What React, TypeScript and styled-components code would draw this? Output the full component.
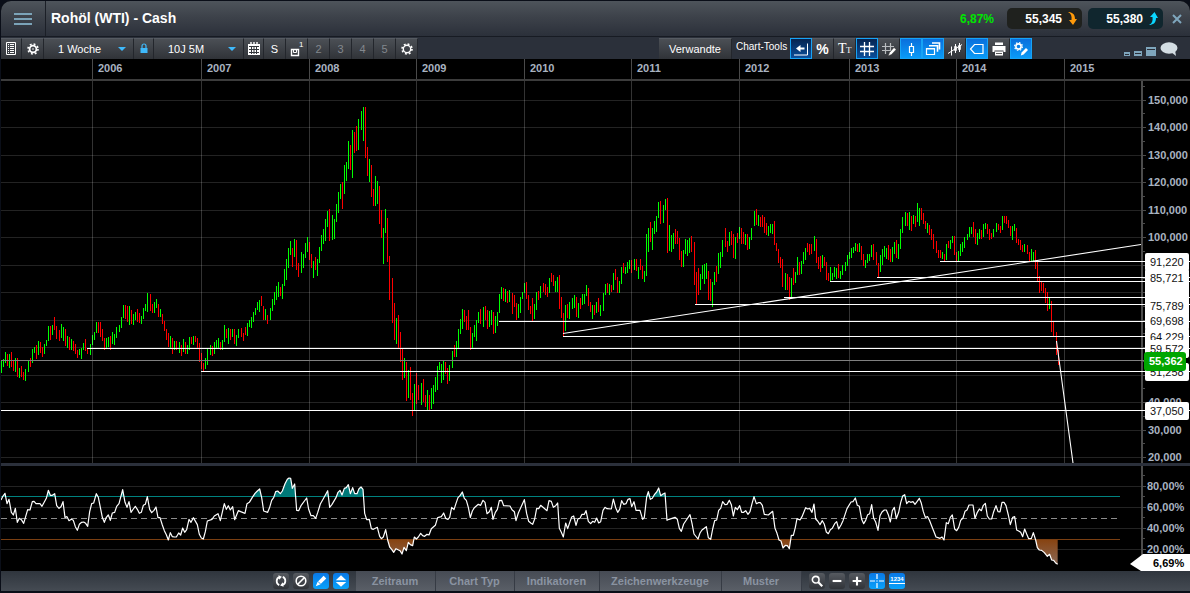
import React from "react";
import styled, { createGlobalStyle, css } from "styled-components";

const GlobalStyle = createGlobalStyle`
  * { box-sizing: border-box; }
  body {
    margin: 0;
    background: #0a0e18;
    font-family: "Liberation Sans", Arial, sans-serif;
    font-size: 11px;
    color: #fff;
  }
  button, select { font: inherit; color: inherit; }
`;

/* ---------- data ---------- */

/* Weekly bars: direction and x, then high and low, in thirds of a pixel from the block's origin. */
const UNIT = 3;

const priceBlocks = [
  {
    x: 0,
    y: 230,
    bars: `g4 391 430|g10 388 411|g16 366 400|r22 372 409|g28 373 415|r34 366 412|r40 391 422|g46 385 427|r52 386 442|g58 416 445|r64 409 440|r70 427 450|g76 418 452|g85 391 427|r91 385 412|g97 358 400|g103 351 370|r109 346 386|g115 334 376|r121 336 370|r127 353 382|g133 344 372|g139 331 348|g145 288 334|r151 289 330|g157 286 314|r163 262 300|r169 289 327|r178 301 332|g184 283 325|g190 291 332|r196 298 347|g202 319 353|r208 322 360|g214 328 359|r220 335 363|r226 343 371|r232 360 383|g238 359 376|g244 355 388|g250 340 361|r256 328 362|r262 355 372|g271 343 375|g277 316 346|g283 307 329|g289 277 310|r295 276 309|r301 278 320|r307 298 334|r313 325 359|g319 325 354|g325 321 350|r331 320 359|g337 307 342|g343 313 344|g349 291 323|g358 285 306|g364 261 293|g370 225 263|r376 226 267|r382 228 276|g388 228 285|r394 240 281|g400 252 285|g406 247 270|r412 238 277|r418 250 280|g424 259 281|g430 236 266|g436 222 243|g442 189 246|r451 192 242|r457 222 248|g463 216 248|g469 207 233|r475 223 262|g481 238 262|r487 252 281|r493 273 303|r499 297 330|r505 309 351|g511 319 353|r517 325 372|g523 333 360|r529 335 360|g538 337 368|r544 346 378|g550 327 366|r556 337 372|g562 347 371|g568 321 360|r574 321 342|g580 318 345|r586 318 336|r592 325 354|r598 341 396|r604 370 416|r610 399 424|g616 385 417|g622 359 404|g631 346 374|r637 348 377|g643 338 371|g649 331 355|g655 324 354|r661 338 361|g667 331 360|g673 286 335|r679 297 323|g685 294 342|r691 297 330|g697 297 321|r703 297 341|g709 317 348|g715 299 325|r724 294 320|r730 309 333|r736 291 315|g742 280 318|g748 270 290|g754 262 295|g760 246 275|g766 234 255|g772 217 240|g778 210 245|r784 198 228|r790 228 270|g796 237 271|r802 256 281|g811 234 270|g817 208 242|g823 186 225|g829 168 210|g835 156 201|r841 171 197|g847 162 207|g853 117 167|g859 87 149|g865 54 114|g871 34 75|r877 54 112|g883 28 80|r889 30 119|r895 99 140`,
  },
  {
    x: 240,
    y: 90,
    bars: `g184 487 549|g190 493 533|g196 460 505|g202 442 486|r208 456 511|r214 492 534|g220 514 563|r226 503 539|g232 508 557|g238 471 518|g244 436 483|g250 418 461|g256 388 452|g262 363 410|r268 358 454|g277 375 450|g283 387 447|g289 342 395|g295 307 368|g301 282 326|r307 278 357|g313 226 311|g319 217 273|g325 154 236|r331 165 239|g337 121 265|r343 127 189|r349 109 182|g355 88 180|g364 65 120|g370 52 153|r376 52 204|r382 172 257|g388 207 275|r394 226 322|r400 298 348|g406 258 347|g412 273 342|r418 289 401|r424 361 443|g430 415 522|g436 357 428|r442 386 515|r448 500 630|r457 564 699|r463 639 751|g469 685 762|r475 676 775|r481 727 817|r487 776 869|g493 805 865|r499 816 934|g505 840 925|r511 831 930|r517 909 978|g523 882 961|r529 850 942|r535 886 930|g544 880 945|r550 867 936|r556 916 950|g562 901 961|r568 915 961|g574 894 957|g580 886 942|g586 861 906|g592 829 899|g598 816 841|g604 823 878|g610 814 869|r616 816 851|r622 835 882|g628 825 872|g637 783 834|r643 766 801|g649 754 801|g655 718 774|g661 687 732|g667 658 717|r673 661 696|r679 679 720|r685 661 720|r691 713 780|g697 730 778|g703 705 742|g709 691 752|g715 667 698|r721 657 701|g730 651 711|r736 648 691|r742 661 716|g748 663 711|g754 660 704|r760 667 732|g766 679 728|g772 667 707|g778 613 669`,
  },
  {
    x: 490,
    y: 180,
    bars: `g34 321 357|r40 324 363|g46 328 366|r52 333 369|g58 330 365|r67 339 401|r73 345 381|r79 370 421|g85 373 413|g91 351 398|g97 337 357|g103 309 339|r109 306 357|r115 345 390|r121 378 402|r127 355 422|g133 373 417|g139 337 391|r145 333 361|g151 319 353|r160 310 336|r166 312 345|r172 321 350|g178 294 338|r184 280 305|r190 286 318|g196 303 335|g202 291 335|r208 285 387|r214 352 413|r220 399 468|g226 375 452|r232 372 413|g238 367 416|g247 354 387|g253 346 383|r259 351 411|g265 370 414|r271 354 387|g277 342 375|g283 342 373|g289 315 349|r295 324 379|r301 366 396|g307 375 416|r313 376 406|g319 366 398|r325 354 397|g331 375 408|g340 339 393|g346 312 345|r352 309 338|g358 312 345|r364 315 336|g370 280 330|r376 267 301|r382 291 338|g388 303 339|g394 261 312|r400 250 279|g406 261 282|g412 246 279|g418 240 267|r424 240 279|g433 237 271|r439 238 273|g445 261 296|r451 237 271|r457 259 296|g463 273 306|g469 162 287|g475 144 215|r481 126 186|g487 145 209|g493 123 162|g499 108 155|g505 66 114|r511 64 131|g520 75 128|g526 58 89|r532 54 218|g538 136 213|g544 165 215|g550 159 207|r556 148 191|r562 154 191|r568 174 240|r574 213 260|g580 210 261|g586 178 221|g592 180 228|g598 174 218|r604 168 216|r613 186 314|r619 277 372|r625 264 345|g631 283 329|g637 256 297|g643 252 312|g649 250 297|r655 273 359|r661 298 362|g667 306 380|g673 277 315|r679 259 305|g685 220 281|g691 216 263|g697 180 230|r706 145 201|r712 183 215|g718 157 197|r724 153 194|r730 162 234|g736 172 236|r742 159 188|g748 142 177|r754 145 191|r760 156 191|g766 162 195|r772 163 210|g778 171 207|g784 144 181|g793 93 137|r799 88 136|g805 105 138`,
  },
  {
    x: 760,
    y: 180,
    bars: `r1 112 141|r7 106 140|r13 112 158|r19 130 165|g25 138 168|g31 132 159|g37 134 162|r43 123 195|r49 190 214|r55 208 248|r61 231 264|r67 239 321|g76 280 330|r82 283 330|r88 291 360|g94 294 354|r100 264 315|g106 276 308|g112 232 285|r118 246 285|g124 243 283|g130 217 252|g136 204 240|r142 189 215|r148 194 224|r154 193 221|g163 169 213|r169 178 250|r175 231 266|r181 229 275|g187 226 263|r193 231 257|r199 247 300|r205 279 302|g211 262 305|g217 280 300|g223 261 291|g229 265 297|r235 253 293|g241 273 296|g247 255 285|g256 246 273|g262 226 258|g268 216 237|g274 205 234|g280 201 219|g286 190 213|r292 192 215|g298 189 216|r304 198 240|r310 222 258|g316 240 263|g322 223 249|g328 222 243|g334 195 230|r340 194 240|r349 216 255|r355 249 292|g361 226 276|g367 207 256|g373 198 230|g379 204 238|r385 197 240|r391 207 245|g397 203 246|g403 187 222|r409 181 233|g415 192 236|g421 147 207|g427 112 158|g436 96 137|r442 99 137|g448 97 150|r454 108 153|g460 105 132|r466 108 141|g472 69 126|g478 84 137|r484 85 120|r490 99 132|r496 123 147|g502 130 159|r508 135 165|r514 147 180|r520 163 207|r529 184 219|r535 211 233|r541 210 235|g547 216 238|r553 222 243|g559 192 239|r565 184 205|g571 180 206|g577 168 189|r583 169 225|r589 217 245|g595 213 243|g601 192 228|g607 186 215|g613 171 204|g622 162 180|g628 141 171|g634 141 162|r640 127 170|r646 147 191|g652 160 194|g658 147 177|r664 150 177|g670 132 171|g676 129 147|r682 132 162|r688 147 180|r694 159 178|g700 147 171|g709 129 156|r715 132 150|r721 139 159|g727 108 150|r733 108 130|r739 108 132|r745 120 144|r751 138 169|g757 139 181|g763 132 154|r769 145 189|r775 177 196|r781 180 210|r787 195 217|g793 192 216|r802 195 222|r808 216 244|g814 207 243|g820 216 243|r826 210 267|r832 246 305|r838 289 340|r844 306 333|r850 309 338|r856 325 369|r862 336 392|g868 355 388|r874 363 456|r880 424 470|r889 457 525|r895 510 555`,
  },
];

const bars = priceBlocks.flatMap((b) =>
  b.bars.split("|").map((s) => {
    const [head, hi, lo] = s.split(" ");
    const top = b.y + Math.floor(+hi / UNIT);
    return {
      up: head[0] === "g",
      x: b.x + Math.floor(+head.slice(1) / UNIT),
      y: top,
      h: b.y + Math.round(+lo / UNIT) - top,
    };
  })
);

/* Relative strength curve, same unit, one block per stretch of the time axis. */
const rsiBlocks: [number, string][] = [
  [
    0,
    "3,120 9,108 15,100 21,131 27,118 34,157 40,165 46,145 52,187 58,175 64,179 71,190 83,149 90,150 97,125 102,124 108,131 120,131 126,139 139,115 145,91 151,106 157,106 164,101 170,137 177,145 183,140 189,125 195,172 201,170 207,182 214,178 220,181 226,200 232,211 238,193 245,187 251,186 257,190 263,199 269,155 275,131 281,129 289,101 295,112 301,142 307,172 313,187 319,172 325,165 331,181 337,159 344,157 350,139 357,131 368,89 375,127 381,142 387,125 393,157 400,147 406,139 412,148 418,160 424,157 430,136 436,133 442,110 449,148 455,158 462,151 468,141 474,173 480,173 487,195 493,212 499,224 505,240 511,218 517,230 523,231 529,231 536,219 542,225 548,204 554,217 560,209 567,178 573,187 580,173 592,194 598,223 604,234 610,237 616,215 622,183 636,178 643,168 654,161 661,182 673,131 679,148 685,137 691,150 698,140 704,179 715,152 722,155 735,160 741,131 748,127 757,112 765,100 772,93 779,87 785,113 791,153 803,157 809,142 815,121 821,113 827,95 833,93 841,101 847,93 855,71 862,58 867,54 872,55 877,85 884,72 890,151 896,152 903,137 920,114 926,148 933,167 940,167 947,175 953,158 961,132 970,116 983,92 989,142 996,133 1008,113 1014,97 1020,91 1026,105 1033,85 1039,83 1045,74 1051,101 1058,83 1064,101 1071,101 1077,86 1083,81 1089,88 1094,160 1100,179 1108,178 1114,206 1120,208 1132,202 1139,229 1144,236 1150,231 1157,209 1163,240 1169,261 1175,268 1181,277 1188,266 1194,269",
  ],
  [
    400,
    "0,272 6,282 12,262 19,272 25,247 31,254 38,257 43,231 49,237 55,231 62,220 68,227 74,229 81,223 87,225 94,206 106,196 113,173 124,170 131,159 137,175 144,178 149,172 155,142 162,149 168,130 174,113 180,107 187,96 193,115 199,121 205,142 211,173 217,153 223,143 235,133 242,136 249,121 255,127 261,161 268,155 274,142 279,178 286,157 292,148 298,122 305,121 311,137 330,138 336,149 343,155 348,182 355,159 373,119 380,161 386,184 393,190 398,193 404,177 410,145 416,146 422,136 441,152 447,122 454,124 460,142 467,137 473,129 478,205 484,217 490,231 497,189 503,206 509,188 515,171 521,168 528,196 534,176 540,175 546,163 553,163 558,152 565,184 572,191 578,184 584,187 590,174 596,189 602,185 609,151 615,142 621,146 634,147 640,117 647,143 653,157 659,148 665,122 671,133 678,131 684,118 690,116 695,140 702,125 708,151 720,151 728,178 733,172 740,111 745,95 751,118 757,115 763,104 770,96 776,84 782,107 789,102 795,99 801,181 807,178 825,172 832,178 838,205 844,214 851,192 870,164 876,190 882,222 894,237 900,219 906,210 919,200 925,233 932,238 938,207 944,182 950,180 956,151 962,145 968,125 975,134 981,133 988,121 994,134 1000,168 1006,142 1012,149 1019,137 1025,157 1031,157 1037,152 1044,163 1050,155 1056,131 1062,110 1069,131 1075,128 1081,128 1087,136 1093,163 1105,165 1118,154 1125,205 1131,220 1137,240 1143,243 1149,264 1156,256 1162,257 1168,266 1174,226 1180,226 1186,202 1191,176",
  ],
  [
    790,
    "30,180 36,170 47,143 53,147 59,145 66,157 72,132 77,177 83,183 90,194 97,182 103,193 109,216 115,221 121,209 127,205 134,191 140,185 146,207 153,195 159,182 171,146 183,126 189,125 196,114 202,136 208,139 215,178 221,191 227,181 233,164 239,161 245,134 251,175 257,186 264,211 270,167 276,156 283,150 289,150 295,164 301,186 307,152 313,142 319,176 326,157 332,128 338,108 344,104 350,131 356,124 362,127 369,125 375,133 381,125 388,115 394,130 400,155 406,172 413,170 419,182 425,198 431,213 438,231 444,233 450,235 456,231 462,240 469,188 475,191 481,172 487,165 494,207 500,212 506,202 512,181 519,174 525,154 531,150 537,135 549,135 555,175 562,157 568,147 574,152 580,136 586,130 592,168 598,177 605,177 611,155 618,137 624,155 630,156 636,127 642,127 648,137 655,165 661,194 668,172 674,170 680,210 686,213 692,217 698,230 704,207 710,222 716,236 724,236 730,218 737,240 742,263 748,270 755,271 763,278 772,289 779,283 785,300 791,301 797,309 803,313",
  ],
];

const rsiPoints = rsiBlocks
  .flatMap(([x0, pts]) =>
    pts.split(" ").map((p) => {
      const [x, y] = p.split(",").map(Number);
      return `${(x0 + x / UNIT).toFixed(2)},${(460 + y / UNIT).toFixed(2)}`;
    })
  )
  .join(" ");

const yearLines = [92, 201, 309, 416, 524, 631, 739, 849, 956, 1064];
const years = ["", "2006", "2007", "2008", "2009", "2010", "2011", "2012", "2013", "2014", "2015"];

const priceTicks: [number, string][] = [
  [100, "150,000"], [127, "140,000"], [155, "130,000"], [182, "120,000"], [210, "110,000"],
  [237, "100,000"], [265, ""], [292, ""], [320, ""], [347, ""], [375, ""],
  [402, "40,000"], [430, "30,000"], [457, "20,000"],
];

const levels: [number, number][] = [
  [940, 261], [877, 277], [830, 281], [784, 297], [695, 304], [499, 321],
  [563, 336], [87, 348], [201, 371], [1, 410],
];

const levelTags: [number, string][] = [
  [282, ""], [296, ""], [262, "91,220"], [278, "85,721"], [306, "75,789"], [321, "69,698"],
  [337, "64,229"], [372, "51,258"], [349, "59,572"], [411, "37,050"],
];

const rsiTicks: [number, string][] = [
  [486, "80,00%"], [507, "60,00%"], [528, "40,00%"], [549, "20,00%"],
];

/* ---------- layout ---------- */

const Page = styled.div`
  min-height: 100vh;
  padding: 1px 0 0 1px;
  background: #0a0e18;
`;

const Window = styled.main`
  display: flex;
  flex-direction: column;
  border-radius: 10px 10px 0 0;
  overflow: hidden;
  background: #000;
`;

const Header = styled.header`
  display: flex;
  align-items: center;
  height: 36px;
  padding-right: 6px;
  background: linear-gradient(#4e545b, #3d424a 45%, #2b303a);
  border-bottom: 1px solid #171b23;
`;

const MenuButton = styled.button`
  display: flex;
  align-items: center;
  justify-content: center;
  width: 45px;
  height: 35px;
  padding: 0;
  border: 0;
  border-right: 1px solid #1b1f27;
  background: none;
`;

const Title = styled.h1`
  flex: 1;
  margin: 0;
  padding: 0 0 2px 5px;
  font-size: 14px;
  line-height: 20px;
`;

const Change = styled.span`
  margin-right: 13px;
  color: #00e600;
  font-size: 12px;
  font-weight: bold;
  line-height: 22px;
`;

const Quote = styled.button<{ $bg: string }>`
  display: flex;
  align-items: center;
  justify-content: flex-end;
  gap: 6px;
  width: 75px;
  height: 21px;
  margin: 0 6px 0 0;
  padding: 0 5px 0 0;
  border: 0;
  border-radius: 5px;
  background: ${(p) => p.$bg};
  font-size: 12px;
  font-weight: bold;
`;

const CloseButton = styled.button`
  display: flex;
  width: 14px;
  padding: 0;
  margin-left: 1px;
  border: 0;
  background: none;
`;

const Toolbar = styled.div`
  display: flex;
  height: 22px;
  padding-top: 1px;
  background: #2b303a;
`;

const face = css`
  background: linear-gradient(#4b4f55, #303338);
  border: 0;
  border-right: 1px solid #23262c;
  border-top: 1px solid #565b62;
`;

const Tool = styled.button<{ $on?: "dark" | "bright"; $dim?: boolean; $width?: number }>`
  display: flex;
  align-items: center;
  justify-content: center;
  width: ${(p) => p.$width ?? 22}px;
  height: 21px;
  padding: 0;
  ${face}
  color: ${(p) => (p.$dim ? "#83888e" : "#fff")};
  ${(p) =>
    p.$on &&
    css`
      border: 1px solid #17a3f5;
      background: ${p.$on === "dark"
        ? "linear-gradient(#06234f, #0a4f9c)"
        : "linear-gradient(#0a6fdc, #0a9bf7)"};
    `}
`;

const PercentSign = styled.span`
  font-size: 14px;
  font-weight: bold;
`;

const Picker = styled.label<{ $width: number }>`
  display: grid;
  align-items: center;
  width: ${(p) => p.$width}px;
  height: 21px;
  ${face}
  > * { grid-area: 1 / 1; }
  > svg { justify-self: end; margin-right: 7px; pointer-events: none; }
`;

const PickerSelect = styled.select`
  appearance: none;
  width: 100%;
  height: 20px;
  padding: 0 0 0 14px;
  border: 0;
  background: transparent;
  option { color: #000; }
`;

const Spacer = styled.div`
  flex: 1;
`;

const Related = styled.button`
  width: 73px;
  height: 21px;
  padding: 0;
  ${face}
`;

const ToolsLabel = styled.span`
  width: 58px;
  padding-left: 4px;
  font-size: 10px;
  line-height: 17px;
  white-space: nowrap;
`;

const WindowTools = styled.div`
  display: flex;
  align-items: flex-end;
  gap: 4px;
  margin-left: 92px;
  padding: 0 12px 3px 0;
`;

const PlainButton = styled.button`
  display: flex;
  padding: 0;
  border: 0;
  background: none;
`;

const YearRow = styled.div`
  display: grid;
  grid-template-columns: 91fr 109fr 108fr 107fr 108fr 107fr 108fr 110fr 107fr 108fr 77fr 49px;
  height: 22px;
  border-bottom: 2px solid #3c3c3c;
`;

const Year = styled.span<{ $first?: boolean }>`
  padding-left: 5px;
  border-left: ${(p) => (p.$first ? 0 : 1)}px solid #4a4a4a;
  color: #a9b3c0;
  font-weight: bold;
  line-height: 18px;
`;

const ChartRow = styled.section`
  display: flex;
`;

const Plot = styled.svg<{ $height: number }>`
  flex: 1;
  min-width: 0;
  width: 100%;
  height: ${(p) => p.$height}px;
`;

const Axis = styled.svg`
  flex: none;
  overflow: visible;
  text {
    font-size: 11px;
    font-weight: bold;
    fill: #a9b3c0;
  }
  text.tag { font-weight: normal; fill: #111; }
  text.live { fill: #fff; }
  text.rsi { fill: #000; }
`;

const Divider = styled.div`
  height: 3px;
  background: #2b303b;
`;

const Footer = styled.footer`
  display: flex;
  align-items: center;
  justify-content: center;
  height: 20px;
  padding-right: 14px;
  background: linear-gradient(#2f353d, #454b53);
`;

const FooterButtons = styled.div`
  display: flex;
  gap: 4px;
  padding: 0 7px;
`;

const SmallButton = styled.button<{ $on?: boolean }>`
  display: flex;
  align-items: center;
  justify-content: center;
  width: 16px;
  height: 16px;
  padding: 0;
  border: 0;
  border-radius: 3px;
  background: ${(p) =>
    p.$on ? "linear-gradient(#0a78e6, #08a2fa)" : "linear-gradient(#565a60, #303338)"};
`;

const Tab = styled.button<{ $width: number }>`
  width: ${(p) => p.$width}px;
  height: 20px;
  padding: 0;
  border: 0;
  border-right: 1px solid #363b44;
  background: linear-gradient(#464b54, #5a5f67);
  color: #8a93a1;
  font-weight: bold;
`;

/* ---------- icons ---------- */

const Icon = ({ children, size = 16 }: { children: React.ReactNode; size?: number }) => (
  <svg width={size} height={size} viewBox="0 0 16 16" fill="none" stroke="#fff" strokeWidth="1.5" aria-hidden="true">
    {children}
  </svg>
);

const Gear = ({ hollow }: { hollow?: boolean }) => (
  <Icon>
    <circle cx="8" cy="8" r={hollow ? 3.7 : 3.4} strokeWidth={hollow ? 1.4 : 1.8} />
    <circle cx="8" cy="8" r="5" strokeWidth="1.6" strokeDasharray="1.9 2.03" />
    {!hollow && <circle cx="8" cy="8" r="0.8" fill="#fff" stroke="none" />}
  </Icon>
);

const Arrow = () => (
  <svg width="8" height="4" viewBox="0 0 8 4" aria-hidden="true">
    <path d="M0 0h8L4 4z" fill="#3fb9fb" />
  </svg>
);

const ListIcon = () => (
  <Icon>
    <path d="M3.5 1.500h9v12h-9z" strokeWidth="1" />
    <path d="M5 3.500h1M7 3.500h4M5 5.500h1M7 5.500h4M5 7.500h1M7 7.500h4M5 9.500h1M7 9.500h4M5 11.500h1M7 11.500h4" strokeWidth="1" />
  </Icon>
);

const LockIcon = () => (
  <Icon>
    <path d="M4.5 7h7v5h-7z" fill="#3fb9fb" stroke="none" />
    <path d="M6 7V5a2 2 0 0 1 4 0V7" stroke="#3fb9fb" strokeWidth="1.2" />
  </Icon>
);

const CalendarIcon = () => (
  <Icon>
    <path d="M2 3h12v11H2z" fill="#fff" stroke="none" />
    <path d="M5 1v3M8 1v3M11 1v3" strokeWidth="1.4" />
    <path d="M3 5.5h10M3 8.5h10M3 11.5h10M5.5 6v7M8 6v7M10.5 6v7" stroke="#35383d" strokeWidth="1" />
  </Icon>
);

const SaveIcon = () => (
  <svg width="18" height="18" viewBox="0 0 18 18" fill="none" stroke="#fff" aria-hidden="true">
    <path d="M3.5 9.500h7v6h-7z" strokeWidth="1.400" />
    <path d="M5.500 10v2.500h3V10" strokeWidth="1" />
    <text x="11" y="7" fontSize="8" fill="#fff" stroke="none">1</text>
  </svg>
);

const BackIcon = () => (
  <Icon>
    <path d="M1 14h13.500V2.500" strokeWidth="1" />
    <path d="M7 7.500h4.500" strokeWidth="2" />
    <path d="M3 7.500 7.500 4v7z" fill="#fff" stroke="none" />
  </Icon>
);

const TextIcon = () => (
  <svg width="18" height="16" viewBox="0 0 18 16" fill="#fff" fontFamily="Liberation Serif, serif" aria-hidden="true">
    <text x="2" y="12" fontSize="14">T</text>
    <text x="10" y="12" fontSize="9">T</text>
  </svg>
);

const GridIcon = () => (
  <Icon>
    <path d="M1 5.5h14M1 10.5h14M5.5 1v14M10.5 1v14" strokeWidth="1.3" />
  </Icon>
);

const GridPenIcon = () => (
  <Icon>
    <path d="M1 5.5h12M1 9.5h8M4.5 2v11M9.5 2v8" stroke="#b9bcbf" strokeWidth="1.2" />
    <path d="M13 6.500 8.500 11.500l-1.300 3.500 3.300-1.500 4.700-5z" fill="#fff" stroke="#333" strokeWidth="0.500" />
  </Icon>
);

const CandleIcon = () => (
  <Icon>
    <path d="M6.5 5.5h4v6h-4zM8.5 2v3.5M8.5 11.5V15" strokeWidth="1.2" />
  </Icon>
);

const CopiesIcon = () => (
  <Icon>
    <path d="M1.5 7.5h8v6h-8z" strokeWidth="1.2" />
    <path d="M1 7.8h9M4 4.800h8.500v6M7 2h7.500v6.500" strokeWidth="1.6" />
  </Icon>
);

const TrendIcon = () => (
  <Icon>
    <path d="M1 12.500 15 3.500" strokeWidth="1" />
    <path d="M4.500 5.500v9M8.500 3v9M12.500 2v9" strokeWidth="1" />
    <path d="M7.500 5.500h2v4h-2zM11.500 4.500h2v4h-2z" strokeWidth="0.800" />
  </Icon>
);

const TagIcon = () => (
  <Icon>
    <path d="M5.5 3.5h8.5v9H5.5L1.5 8z" strokeWidth="1.2" />
  </Icon>
);

const PrintIcon = () => (
  <Icon>
    <path d="M4 1.5h8V4H4zM1.5 5h13v6h-2V9.5h-9V11h-2zM4 10.5h8v4H4z" fill="#fff" stroke="none" />
    <path d="M5 12.5h6" stroke="#333" strokeWidth="0.8" />
  </Icon>
);

const GearPenIcon = () => (
  <Icon>
    <circle cx="5.5" cy="5.5" r="2.6" strokeWidth="1.6" />
    <circle cx="5.5" cy="5.5" r="3.9" strokeWidth="1.2" strokeDasharray="1.5 1.56" />
    <path d="m13 7-4.4 4.6-.8 2.9 2.8-.9L15 9z" fill="#fff" stroke="none" />
  </Icon>
);

const PencilIcon = () => (
  <Icon size={14}>
    <path d="M11 2 4 9l-2 5 5-2 7-7z" fill="#fff" stroke="none" />
    <path d="m4.5 8.5 3 3" stroke="#0a8cf0" strokeWidth="1" />
  </Icon>
);

const Square = ({ w, h }: { w: number; h: number }) => (
  <svg width={w} height={h} shapeRendering="crispEdges" aria-hidden="true">
    <rect width={w} height={h} fill="#7fa6bd" />
    <rect x="1" y="2" width={w - 2} height="1" fill="#2b303a" />
  </svg>
);

/* ---------- charts ---------- */

const PriceChart = () => (
  <ChartRow aria-label="Kursverlauf">
    <Plot $height={382} viewBox="1 81 1140 382" preserveAspectRatio="none">
      <g shapeRendering="crispEdges">
        {priceTicks.map(([y]) => (
          <rect key={y} x="1" y={y} width="1140" height="1" fill="#232323" />
        ))}
        {bars.map((b, i) => (
          <rect key={i} x={b.x} y={b.y} width="1" height={b.h} fill={b.up ? "#00ff00" : "#ff0000"} />
        ))}
        {yearLines.map((x) => (
          <rect key={x} x={x} y="81" width="1" height="382" fill="#fff" fillOpacity="0.2" />
        ))}
        <rect x="1" y="360" width="1140" height="1" fill="#808080" />
        {levels.map(([x, y]) => (
          <rect key={y} x={x} y={y} width={1141 - x} height="1" fill="#fff" />
        ))}
      </g>
      <path d="M563 333.5 1141 244.5M1056.5 341 1073 463" stroke="#fff" strokeWidth="1.1" fill="none" />
    </Plot>
    <Axis width="49" height="382" viewBox="1141 81 49 382">
      <g shapeRendering="crispEdges" fill="#4c4c4c">
        <rect x="1141" y="81" width="2" height="382" />
        {priceTicks.map(([y]) => (
          <React.Fragment key={y}>
            <rect x="1143" y={y} width="3" height="1" />
            <rect x="1143" y={y - 14} width="2" height="1" />
          </React.Fragment>
        ))}
        <rect x="1141" y="360" width="4" height="1" fill="#808080" />
        {levels.map(([, y]) => (
          <rect key={y} x="1141" y={y} width="49" height="1" fill="#fff" />
        ))}
      </g>
      {priceTicks.map(([y, label]) => label && <text key={y} x="1148" y={y + 4}>{label}</text>)}
      {levelTags.map(([y, label]) => (
        <g key={y}>
          <rect x="1145" y={y - 9} width="44" height={18} rx="2" fill="#fff" />
          <text className="tag" x="1150" y={y + 4}>{label}</text>
        </g>
      ))}
      <rect x="1144" y="352" width="42" height="19" rx="3" fill="#00a600" />
      <path d="M1190 356v9l-4-4.5z" fill="#000" />
      <text className="live" x="1149" y="365">55,362</text>
    </Axis>
  </ChartRow>
);

const RsiChart = () => (
  <ChartRow aria-label="Relative Stärke">
    <Plot $height={105} viewBox="1 466 1140 105" preserveAspectRatio="none">
      <defs>
        <linearGradient id="low" gradientUnits="userSpaceOnUse" x1="0" x2="0" y1="539" y2="565">
          <stop offset="0" stopColor="#87420f" />
          <stop offset="1" stopColor="#8a6a58" />
        </linearGradient>
        <clipPath id="above"><rect x="1" y="466" width="1140" height="30" /></clipPath>
        <clipPath id="below"><rect x="1" y="540" width="1140" height="31" /></clipPath>
      </defs>
      <g shapeRendering="crispEdges" fill="#232323">
        {rsiTicks.map(([y]) => (
          <rect key={y} x="1" y={y} width="1140" height="1" />
        ))}
      </g>
      <path clipPath="url(#above)" d={`M1 497L${rsiPoints}L1057.7 497z`} fill="#007878" />
      <path clipPath="url(#below)" d={`M1 539L${rsiPoints}L1057.7 539z`} fill="url(#low)" />
      <g shapeRendering="crispEdges">
        <rect x="1" y="496" width="1119" height="1" fill="#00827f" />
        <rect x="1" y="539" width="1119" height="1" fill="#7a3f12" />
        <path d="M1 518.5H1118" stroke="#8c8c8c" strokeDasharray="6 4" />
      </g>
      <polyline points={rsiPoints} fill="none" stroke="#fff" strokeWidth="1.2" strokeLinejoin="round" />
    </Plot>
    <Axis width="49" height="105" viewBox="1141 466 49 105">
      <g shapeRendering="crispEdges" fill="#4c4c4c">
        <rect x="1141" y="466" width="2" height="105" />
        {rsiTicks.map(([y]) => (
          <React.Fragment key={y}>
            <rect x="1143" y={y} width="3" height="1" />
            <rect x="1143" y={y - 11} width="2" height="1" />
          </React.Fragment>
        ))}
      </g>
      {rsiTicks.map(([y, label]) => (
        <text key={y} x="1147" y={y + 4}>{label}</text>
      ))}
      <path d="M1130 564 1143 554H1190V571H1141z" fill="#fff" />
      <text className="rsi" x="1153" y="567">6,69%</text>
    </Axis>
  </ChartRow>
);

const tabs: [string, number][] = [
  ["Zeitraum", 80], ["Chart Typ", 79], ["Indikatoren", 85], ["Zeichenwerkzeuge", 122], ["Muster", 80],
];

export default function App() {
  return (
    <Page>
      <GlobalStyle />
      <Window>
        <Header>
          <MenuButton aria-label="Menü">
            <svg width="18" height="12" shapeRendering="crispEdges" fill="#7ba3b8" aria-hidden="true">
              <rect width="18" height="2" y="0" />
              <rect width="18" height="2" y="5" />
              <rect width="18" height="2" y="10" />
            </svg>
          </MenuButton>
          <Title>Rohöl (WTI) - Cash</Title>
          <Change>6,87%</Change>
          <Quote $bg="#1f211e">
            55,345
            <svg width="9" height="13" viewBox="0 0 9 13" aria-hidden="true">
              <path d="M0 0c4 0 7 2 7 7h2l-4 6-4-5h2.500C4 4 3 1.500 0 0z" fill="#ff9a0a" />
            </svg>
          </Quote>
          <Quote $bg="#10262e">
            55,380
            <svg width="9" height="13" viewBox="0 0 9 13" aria-hidden="true">
              <path d="M0 13c4 0 7-2 7-7h2L5.500 0 1 5h2.500C4 9 3 11.500 0 13z" fill="#0ad6ff" />
            </svg>
          </Quote>
          <CloseButton aria-label="Schließen">
            <svg width="14" height="12" viewBox="0 0 14 12" aria-hidden="true">
              <path d="m3 2 8 8M11 2l-8 8" stroke="#7fa6bd" strokeWidth="2" />
            </svg>
          </CloseButton>
        </Header>

        <Toolbar>
          <Tool $width={21} aria-label="Liste"><ListIcon /></Tool>
          <Tool aria-label="Einstellungen"><Gear /></Tool>
          <Picker $width={90}>
            <PickerSelect aria-label="Intervall"><option>1 Woche</option></PickerSelect>
            <Arrow />
          </Picker>
          <Tool $width={20} aria-label="Sperren"><LockIcon /></Tool>
          <Picker $width={90}>
            <PickerSelect aria-label="Zeitspanne"><option>10J 5M</option></PickerSelect>
            <Arrow />
          </Picker>
          <Tool $width={20} aria-label="Kalender"><CalendarIcon /></Tool>
          <Tool>S</Tool>
          <Tool aria-label="Speichern"><SaveIcon /></Tool>
          {["2", "3", "4", "5"].map((n) => <Tool key={n} $dim>{n}</Tool>)}
          <Tool aria-label="Optionen"><Gear hollow /></Tool>
          <Spacer />
          <Related>Verwandte</Related>
          <ToolsLabel>Chart-Tools</ToolsLabel>
          <Tool $on="dark" aria-label="Zurück"><BackIcon /></Tool>
          <Tool aria-label="Prozent"><PercentSign>%</PercentSign></Tool>
          <Tool aria-label="Text"><TextIcon /></Tool>
          <Tool $on="dark" aria-label="Raster"><GridIcon /></Tool>
          <Tool aria-label="Raster bearbeiten"><GridPenIcon /></Tool>
          <Tool $on="bright" aria-label="Kerzen"><CandleIcon /></Tool>
          <Tool $on="bright" aria-label="Ebenen"><CopiesIcon /></Tool>
          <Tool aria-label="Trend"><TrendIcon /></Tool>
          <Tool $on="bright" aria-label="Preismarke"><TagIcon /></Tool>
          <Tool aria-label="Drucken"><PrintIcon /></Tool>
          <Tool $on="bright" aria-label="Werkzeuge"><GearPenIcon /></Tool>
          <WindowTools>
            <PlainButton aria-label="Klein"><Square w={6} h={4} /></PlainButton>
            <PlainButton aria-label="Mittel"><Square w={8} h={5} /></PlainButton>
            <PlainButton aria-label="Groß"><Square w={10} h={9} /></PlainButton>
            <PlainButton aria-label="Kommentar">
              <svg width="18" height="14" viewBox="0 0 18 14" aria-hidden="true">
                <ellipse cx="9" cy="6" rx="8.500" ry="5.800" fill="#d3dde3" />
                <path d="m11 10 5 4-1-6z" fill="#d3dde3" />
              </svg>
            </PlainButton>
          </WindowTools>
        </Toolbar>

        <YearRow>
          {years.map((y, i) => <Year key={i} $first={i === 0}>{y}</Year>)}
        </YearRow>
        <PriceChart />
        <Divider />
        <RsiChart />

        <Footer>
          <FooterButtons>
            <SmallButton aria-label="Aktualisieren">
              <Icon size={14}>
                <path d="M6.500 3.500C2 4.500 2 11 6 12.700M9.500 12.500C14 11.500 14 5 10 3.300" strokeWidth="2" />
                <path d="M5 1.500 9 3 6 6.500zM11 14.500 7 13l3-3.500z" fill="#fff" stroke="none" />
              </Icon>
            </SmallButton>
            <SmallButton aria-label="Löschen">
              <Icon size={14}>
                <circle cx="8" cy="8" r="5.500" strokeWidth="1.800" />
                <path d="m4 12 8-8" strokeWidth="1.800" />
              </Icon>
            </SmallButton>
            <SmallButton $on aria-label="Zeichnen"><PencilIcon /></SmallButton>
            <SmallButton $on aria-label="Skalieren">
              <Icon size={14}>
                <path d="M2 7h12L8 1.500zM2 9h12l-6 5.500z" fill="#fff" stroke="none" />
              </Icon>
            </SmallButton>
          </FooterButtons>
          {tabs.map(([label, w]) => <Tab key={label} $width={w}>{label}</Tab>)}
          <FooterButtons>
            <SmallButton aria-label="Suchen">
              <Icon size={14}>
                <circle cx="6.500" cy="6.500" r="3.800" strokeWidth="1.800" />
                <path d="m9.500 9.500 4.500 4.500" strokeWidth="2.400" />
              </Icon>
            </SmallButton>
            <SmallButton aria-label="Verkleinern">
              <Icon size={14}><path d="M3 8h10" strokeWidth="2.400" /></Icon>
            </SmallButton>
            <SmallButton aria-label="Vergrößern">
              <Icon size={14}><path d="M3 8h10M8 3v10" strokeWidth="2.400" /></Icon>
            </SmallButton>
            <SmallButton $on aria-label="Fadenkreuz">
              <Icon><path d="M1 8h5M7.300 8h1.400M10 8h5M8 1v5M8 10v5" strokeWidth="1.200" /></Icon>
            </SmallButton>
            <SmallButton $on aria-label="Werte">
              <svg width="16" height="16" viewBox="0 0 16 16" aria-hidden="true">
                <text x="8" y="8" fontSize="6" fontWeight="bold" fill="#fff" textAnchor="middle">1234</text>
                <path d="M0 10.500h16" stroke="#fff" />
              </svg>
            </SmallButton>
          </FooterButtons>
        </Footer>
      </Window>
    </Page>
  );
}
